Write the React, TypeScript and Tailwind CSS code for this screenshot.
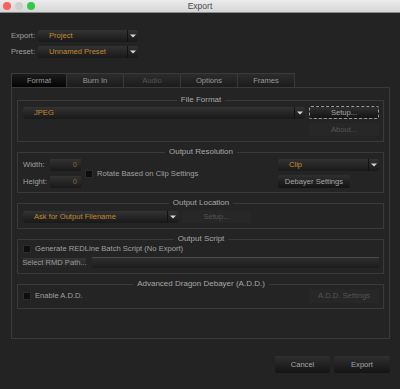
import type { ReactNode } from 'react';

const grad = 'bg-gradient-to-b from-[#333333] to-[#191919]';

function Arrow() {
  return (
    <svg width="6" height="4" viewBox="0 0 6 4" className="block">
      <path d="M0 0.5 H6 L3 3.5 Z" fill="#d8d8d8" />
    </svg>
  );
}

function Dropdown({ value, className = '' }: { value: string; className?: string }) {
  return (
    <div className={`flex h-[12px] items-stretch rounded-[2px] ${grad} ${className}`}>
      <div className="flex flex-1 items-center pl-[11px] text-[#c18a32]">{value}</div>
      <div className="flex w-[11px] items-center justify-center border-l border-[#121212]">
        <Arrow />
      </div>
    </div>
  );
}

function Button({
  label,
  className = '',
  disabled = false,
  focused = false,
}: {
  label: string;
  className?: string;
  disabled?: boolean;
  focused?: boolean;
}) {
  if (disabled) {
    return (
      <div className={`flex items-center justify-center whitespace-nowrap rounded-[2px] bg-[#272727] text-[#555555] ${className}`}>
        {label}
      </div>
    );
  }
  return (
    <div
      className={`flex items-center justify-center whitespace-nowrap rounded-[2px] bg-gradient-to-b from-[#303030] to-[#141414] text-[#a6a6a6] ${
        focused ? 'border border-dashed border-[#9a9a9a]' : ''
      } ${className}`}
    >
      {label}
    </div>
  );
}

function Check() {
  return <div className="h-[8px] w-[8px] shrink-0 border border-[#2c2c2c] bg-[#0e0e0e]" />;
}

function Group({ title, children, className = '' }: { title: string; children: ReactNode; className?: string }) {
  return (
    <fieldset className={`border border-[#3a3a3a] pl-[5px] pr-[4px] ${className}`}>
      <legend className="mx-auto px-[4px] text-[8px] text-[#a8a8a8] leading-[10px]">{title}</legend>
      {children}
    </fieldset>
  );
}

const tabs = ['Format', 'Burn In', 'Audio', 'Options', 'Frames'];

export default function App() {
  return (
    <div
      className="flex h-[389px] w-[400px] flex-col bg-[#232323] text-[7.6px] leading-none text-[#a0a0a0]"
      style={{ fontFamily: '"Liberation Sans", Arial, sans-serif' }}
    >
      {/* title bar */}
      <div className="grid h-[13px] grid-cols-[1fr_auto_1fr] items-center border-b border-[#8a8a8a] bg-gradient-to-b from-[#ececec] to-[#d6d6d6]">
        <div className="flex gap-[4px] pl-[3px]">
          <span className="h-[8px] w-[8px] rounded-full bg-[#fc605c]" />
          <span className="h-[8px] w-[8px] rounded-full bg-[#cfcfcf]" />
          <span className="h-[8px] w-[8px] rounded-full bg-[#34c84a]" />
        </div>
        <div className="text-[8.5px] text-[#4a4a4a]">Export</div>
        <div />
      </div>

      {/* export / preset */}
      <div className="mt-[17px] flex flex-col gap-[4px] pl-[11px]">
        <div className="flex items-center">
          <span className="w-[27px]">Export:</span>
          <Dropdown value="Project" className="w-[100px]" />
        </div>
        <div className="flex items-center">
          <span className="w-[27px]">Preset:</span>
          <Dropdown value="Unnamed Preset" className="w-[100px]" />
        </div>
      </div>

      {/* tabs */}
      <div className="mt-[15px] flex pl-[11px]">
        {tabs.map((t, i) => (
          <div
            key={t}
            className={`flex h-[14px] items-center justify-center border-t border-r border-[#3a3a3a] ${
              i === 0
                ? 'w-[56px] border-l bg-gradient-to-b from-[#1c1c1c] to-[#050505]'
                : 'w-[57px] bg-gradient-to-b from-[#2c2c2c] to-[#1c1c1c]'
            } ${t === 'Audio' ? 'text-[#555555]' : 'text-[#9a9a9a]'}`}
          >
            {t}
          </div>
        ))}
      </div>

      {/* panel */}
      <div className="mr-[10px] ml-[11px] flex h-[252px] flex-col gap-[5px] border border-[#3a3a3a] bg-[#242424] px-[5px] pt-[7px]">
        <Group title="File Format" className="pb-[5px]">
          <div className="flex gap-[4px] pt-[1px]">
            <div className="flex-1 pt-[1px]">
              <Dropdown value="JPEG" />
            </div>
            <div className="flex w-[70px] flex-col gap-[4px]">
              <Button label="Setup..." focused className="h-[13px]" />
              <Button label="About..." disabled className="h-[13px]" />
            </div>
          </div>
        </Group>

        <Group title="Output Resolution" className="pb-[4px]">
          <div className="flex items-center pt-[2px]">
            <div className="grid grid-cols-[27px_31px] items-center gap-y-[5px]">
              <span>Width:</span>
              <div className={`flex h-[12px] items-center justify-end pr-[4px] ${grad} text-[#8a6a36]`}>0</div>
              <span>Height:</span>
              <div className={`flex h-[12px] items-center justify-end pr-[4px] ${grad} text-[#8a6a36]`}>0</div>
            </div>
            <div className="ml-[4px] flex items-center gap-[4px]">
              <Check />
              <span>Rotate Based on Clip Settings</span>
            </div>
            <div className="ml-auto flex w-[101px] flex-col gap-[4px]">
              <Dropdown value="Clip" className="h-[11px]" />
              <Button label="Debayer Settings" className="h-[13px] w-[72px]" />
            </div>
          </div>
        </Group>

        <Group title="Output Location" className="pt-[2px] pb-[5px]">
          <div className="flex items-center gap-[4px]">
            <Dropdown value="Ask for Output Filename" className="w-[155px]" />
            <Button label="Setup..." disabled className="h-[13px] w-[69px]" />
          </div>
        </Group>

        <Group title="Output Script" className="pb-[5px]">
          <div className="flex flex-col gap-[4px] pt-[1px]">
            <div className="flex items-center gap-[4px]">
              <Check />
              <span>Generate REDLine Batch Script (No Export)</span>
            </div>
            <div className="flex items-center gap-[6px]">
              <div className="flex h-[10px] w-[63px] items-center justify-center whitespace-nowrap bg-gradient-to-b from-[#353535] to-[#232323] text-[#9a9a9a]">
                Select RMD Path...
              </div>
              <div className="h-[11px] flex-1 border-t border-[#4a4a4a] bg-gradient-to-b from-[#2e2e2e] to-[#1c1c1c]" />
            </div>
          </div>
        </Group>

        <Group title="Advanced Dragon Debayer (A.D.D.)" className="pb-[5px]">
          <div className="flex items-center">
            <div className="flex items-center gap-[4px]">
              <Check />
              <span>Enable A.D.D.</span>
            </div>
            <Button label="A.D.D. Settings" disabled className="ml-auto h-[14px] w-[70px]" />
          </div>
        </Group>
      </div>

      {/* footer buttons */}
      <div className="mt-[17px] flex justify-end gap-[4px] pr-[10px]">
        <Button label="Cancel" className="h-[17px] w-[55px]" />
        <Button label="Export" className="h-[17px] w-[56px]" />
      </div>
    </div>
  );
}
